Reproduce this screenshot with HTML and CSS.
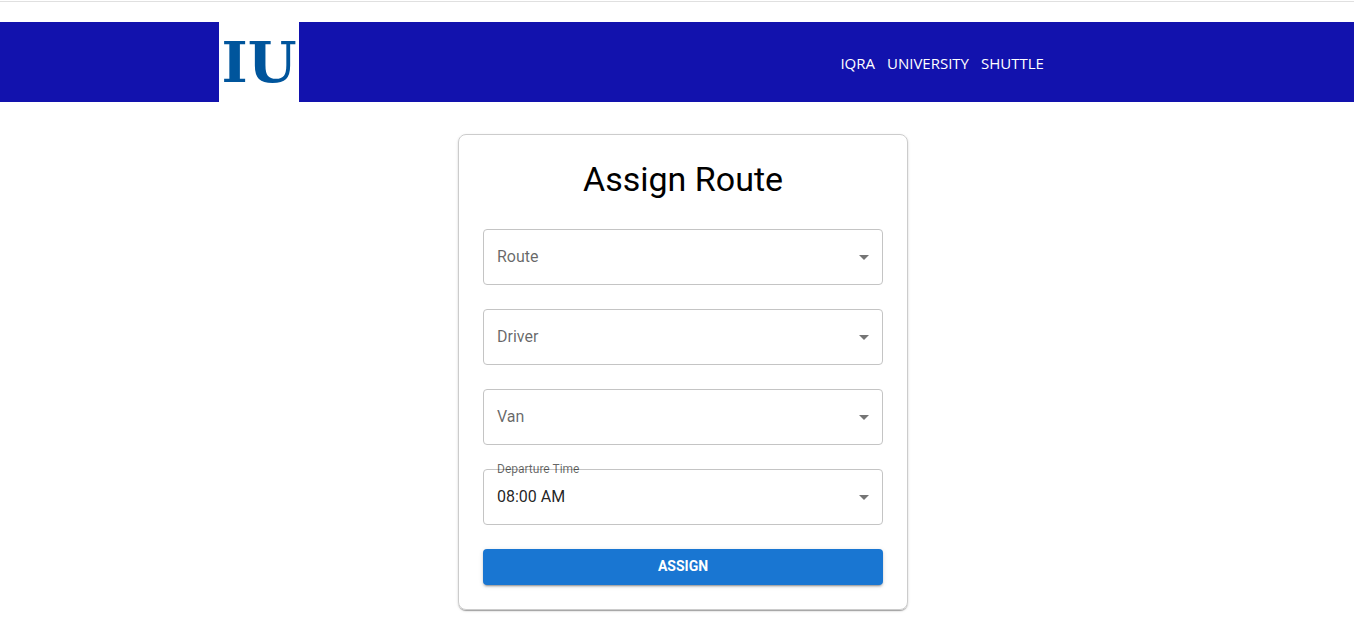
FILE: index.html
```html
<!DOCTYPE html>
<html lang="en">
<head>
  <meta charset="utf-8">
  <meta name="viewport" content="width=device-width, initial-scale=1">
  <title>Assign Route</title>
  <link rel="stylesheet" href="styles.css">
</head>
<body>
  <div class="topline"></div>
  <header class="banner">
    <svg class="logo" viewBox="0 0 80 80" role="img" aria-label="IU">
      <rect width="80" height="80" fill="#fff"/>
      <text class="logo-text" x="40" y="60" text-anchor="middle">IU</text>
    </svg>
    <div class="brand"><span>IQRA</span><span>UNIVERSITY</span><span>SHUTTLE</span></div>
  </header>
  <main class="page">
    <form class="card">
      <h1 class="title">Assign Route</h1>
      <div class="field">
        <select class="select" id="route"><option></option></select>
        <label class="label" for="route">Route</label>
        <svg class="arrow" viewBox="0 0 24 24" aria-hidden="true"><path d="M7 10l5 5 5-5z"/></svg>
      </div>
      <div class="field">
        <select class="select" id="driver"><option></option></select>
        <label class="label" for="driver">Driver</label>
        <svg class="arrow" viewBox="0 0 24 24" aria-hidden="true"><path d="M7 10l5 5 5-5z"/></svg>
      </div>
      <div class="field">
        <select class="select" id="van"><option></option></select>
        <label class="label" for="van">Van</label>
        <svg class="arrow" viewBox="0 0 24 24" aria-hidden="true"><path d="M7 10l5 5 5-5z"/></svg>
      </div>
      <div class="field">
        <select class="select" id="time"><option>08:00 AM</option></select>
        <label class="label label-raised" for="time">Departure Time</label>
        <svg class="arrow" viewBox="0 0 24 24" aria-hidden="true"><path d="M7 10l5 5 5-5z"/></svg>
      </div>
      <button class="submit" type="button">ASSIGN</button>
    </form>
  </main>
</body>
</html>
```

FILE: styles.css
```css
* {
  box-sizing: border-box;
}

body {
  margin: 0;
  background: #fff;
  color: #000;
  font-family: Roboto, "Liberation Sans", sans-serif;
  font-size: 16px;
}

.topline {
  height: 2px;
  border-bottom: 1px solid #e0e0e0;
  margin-bottom: 20px;
}

.banner {
  display: flex;
  align-items: center;
  justify-content: space-between;
  padding: 0 22.9% 0 16.2%;
  background: #1212ad;
}

.logo {
  display: block;
  width: 80px;
  height: 80px;
}

.logo-text {
  font-family: "DejaVu Serif", serif;
  font-size: 56px;
  font-weight: 700;
  fill: #00559c;
}

.brand {
  display: flex;
  gap: 12px;
  padding-top: 2px;
  color: #fff;
  font-family: "Open Sans", "Noto Sans", sans-serif;
  font-size: 15px;
  line-height: 24px;
}

.page {
  display: flex;
  justify-content: center;
  padding: 32px 0 24px 12px;
}

.card {
  display: flex;
  flex-direction: column;
  gap: 24px;
  width: 100%;
  max-width: 450px;
  padding: 24px;
  border: 1px solid #ccc;
  border-radius: 8px;
  box-shadow: 0 2px 1px -1px rgba(0, 0, 0, 0.2), 0 1px 1px rgba(0, 0, 0, 0.14), 0 1px 3px rgba(0, 0, 0, 0.12);
}

.title {
  margin: 0 0 6px;
  font-size: 34px;
  font-weight: 400;
  line-height: 40px;
  text-align: center;
}

.field {
  position: relative;
}

.select {
  display: block;
  width: 100%;
  height: 56px;
  padding: 0 32px 2px 13px;
  border: 1px solid #c4c4c4;
  border-radius: 4px;
  background: transparent;
  color: rgba(0, 0, 0, 0.87);
  font: inherit;
  appearance: none;
}

.label {
  position: absolute;
  top: 16px;
  left: 14px;
  color: rgba(0, 0, 0, 0.6);
  line-height: 24px;
  pointer-events: none;
}

.label-raised {
  top: -9px;
  font-size: 12px;
  line-height: 18px;
}

.arrow {
  position: absolute;
  top: 16px;
  right: 7px;
  width: 24px;
  height: 24px;
  fill: rgba(0, 0, 0, 0.54);
  pointer-events: none;
}

.submit {
  height: 36px;
  padding: 0 16px 2px;
  border: 0;
  border-radius: 4px;
  background: #1976d2;
  box-shadow: 0 3px 1px -2px rgba(0, 0, 0, 0.2), 0 2px 2px rgba(0, 0, 0, 0.14), 0 1px 5px rgba(0, 0, 0, 0.12);
  color: #fff;
  font: inherit;
  font-size: 14px;
  font-weight: 700;
}
```
